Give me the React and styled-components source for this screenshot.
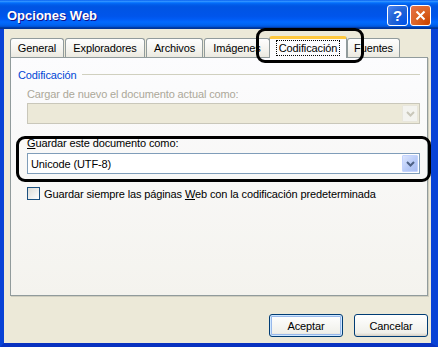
import React from 'react'
import styled, { createGlobalStyle } from 'styled-components'

const Global = createGlobalStyle`
  body {
    margin: 0;
    font-family: "Liberation Sans", Arial, sans-serif;
    font-size: 11px;
    color: #000;
  }
`

const tabs = [
  { label: 'General', width: 54 },
  { label: 'Exploradores', width: 80 },
  { label: 'Archivos', width: 57 },
  { label: 'Imágenes', width: 66 },
  { label: 'Codificación', width: 78, active: true },
  { label: 'Fuentes', width: 53 },
]

const Chevron = ({ color }) => (
  <svg width="9" height="6" viewBox="0 0 9 6">
    <path d="M1 1 L4.5 4.5 L8 1" fill="none" stroke={color} strokeWidth="2" />
  </svg>
)

const App = () => {
  return (
    <Window>
      <Global />
      <TitleBar>
        <Title>Opciones Web</Title>
        <CaptionButton kind="help">?</CaptionButton>
        <CaptionButton kind="close">
          <svg width="11" height="11" viewBox="0 0 11 11">
            <path d="M1.5 1.5 L9.5 9.5 M9.5 1.5 L1.5 9.5" stroke="#fff" strokeWidth="2" />
          </svg>
        </CaptionButton>
      </TitleBar>
      <Body>
        <TabStrip>
          {tabs.map(t => (
            <Tab key={t.label} width={t.width} active={t.active}>
              {t.active ? <Focus>{t.label}</Focus> : t.label}
            </Tab>
          ))}
        </TabStrip>
        <Panel>
          <GroupHeader>
            <GroupTitle>Codificación</GroupTitle>
            <GroupLine />
          </GroupHeader>
          <Group>
            <FieldLabel disabled>Cargar de nuevo el documento actual como:</FieldLabel>
            <Combo disabled>
              <ComboText />
              <DropButton disabled>
                <Chevron color="#C9C7BA" />
              </DropButton>
            </Combo>
            <FieldLabel spaced>
              <u>G</u>uardar este documento como:
            </FieldLabel>
            <Combo>
              <ComboText>Unicode (UTF-8)</ComboText>
              <DropButton>
                <Chevron color="#4D6185" />
              </DropButton>
            </Combo>
            <CheckRow>
              <CheckBox />
              <span>
                Guardar siempre las páginas <u>W</u>eb con la codificación predeterminada
              </span>
            </CheckRow>
          </Group>
        </Panel>
        <ButtonRow>
          <Button primary>Aceptar</Button>
          <Button>Cancelar</Button>
        </ButtonRow>
      </Body>
      <Mark style={{ left: 256, top: 28, width: 108, height: 35 }} />
      <Mark style={{ left: 16, top: 136, width: 415, height: 46 }} />
    </Window>
  )
}

export default App

const Window = styled.div`
  position: relative;
  width: 438px;
  height: 347px;
  display: flex;
  flex-direction: column;
  overflow: hidden;
`

const TitleBar = styled.div`
  height: 29px;
  flex: none;
  display: flex;
  align-items: center;
  gap: 2px;
  padding: 0 7px 0 7px;
  background: linear-gradient(
    to bottom,
    #0058ee 0%,
    #3593ff 4%,
    #288eff 6%,
    #127dff 8%,
    #036ffc 10%,
    #0262ee 14%,
    #0057e5 20%,
    #0054e3 24%,
    #0055eb 56%,
    #005bf5 66%,
    #026afe 76%,
    #0062ef 86%,
    #0052d6 92%,
    #0040ab 94%,
    #003092 100%
  );
`

const Title = styled.div`
  flex: 1;
  color: #fff;
  font-weight: bold;
  font-size: 13px;
  text-shadow: 1px 1px #0f1089;
  padding-top: 1px;
`

const CaptionButton = styled.div`
  width: 19px;
  height: 19px;
  border: 1px solid #fff;
  border-radius: 3px;
  display: flex;
  align-items: center;
  justify-content: center;
  color: #fff;
  font-weight: bold;
  font-size: 15px;
  margin-top: 1px;
  background: ${({ kind }) =>
    kind === 'close'
      ? 'radial-gradient(circle at 90% 90%, #cc4600 0%, #dc6527 55%, #e7714c 100%)'
      : 'radial-gradient(circle at 90% 90%, #0054e9 0%, #2263d5 55%, #4f86f3 100%)'};
`

const Body = styled.div`
  flex: 1;
  display: flex;
  flex-direction: column;
  background: #ece9d8;
  border-left: 4px solid #0842d6;
  border-right: 7px solid #0842d6;
  border-bottom: 4px solid #0831c0;
  padding: 7px 3px 6px 6px;
  letter-spacing: -0.12px;
`

const TabStrip = styled.div`
  height: 22px;
  display: flex;
  align-items: flex-end;
  position: relative;
  z-index: 1;
`

const Tab = styled.div`
  width: ${({ width }) => width}px;
  flex: none;
  display: flex;
  align-items: center;
  justify-content: center;
  box-sizing: border-box;
  border: 1px solid #919b9c;
  border-bottom: none;
  border-radius: 3px 3px 0 0;
  height: ${({ active }) => (active ? 22 : 19)}px;
  margin: ${({ active }) => (active ? '0 0 0 -2px' : '0 1px 1px 0')};
  background: ${({ active }) =>
    active ? '#fcfcfe' : 'linear-gradient(#fefefe, #f4f3ee 60%, #ebe9e0)'};
  border-top: ${({ active }) => (active ? '3px solid #ffc83c' : '1px solid #919b9c')};
  padding-bottom: ${({ active }) => (active ? 1 : 0)}px;
`

const Focus = styled.span`
  outline: 1px dotted #000;
  outline-offset: 1px;
  padding: 0 1px;
`

const Panel = styled.div`
  height: 239px;
  box-sizing: border-box;
  margin-top: -1px;
  border: 1px solid #919b9c;
  background: linear-gradient(#fcfcfe, #f4f3ee);
  box-shadow: 1px 1px 0 #d0cebf;
  padding: 10px 7px 0 7px;
`

const GroupHeader = styled.div`
  display: flex;
  align-items: center;
  height: 13px;
`

const GroupTitle = styled.span`
  color: #0046d5;
`

const GroupLine = styled.div`
  flex: 1;
  margin-left: 6px;
  border-top: 1px solid #d0d0bf;
`

const Group = styled.div`
  padding: 7px 0 0 9px;
  display: flex;
  flex-direction: column;
`

const FieldLabel = styled.div`
  height: 13px;
  line-height: 13px;
  color: ${({ disabled }) => (disabled ? '#aca899' : '#000')};
  margin-top: ${({ spaced }) => (spaced ? 13 : 0)}px;
  margin-bottom: ${({ spaced }) => (spaced ? 3 : 2)}px;
`

const Combo = styled.div`
  height: 21px;
  box-sizing: border-box;
  display: flex;
  align-items: center;
  border: 1px solid ${({ disabled }) => (disabled ? '#c9c7ba' : '#7f9db9')};
  background: ${({ disabled }) => (disabled ? '#ece9d8' : '#fff')};
  padding-right: 1px;
`

const ComboText = styled.div`
  flex: 1;
  padding-left: 3px;
`

const DropButton = styled.div`
  width: 16px;
  height: 17px;
  box-sizing: border-box;
  display: flex;
  align-items: center;
  justify-content: center;
  border-radius: 1px;
  border: 1px solid ${({ disabled }) => (disabled ? '#e8e6dc' : '#c3d3fd')};
  background: ${({ disabled }) =>
    disabled ? '#f3f3ef' : 'linear-gradient(135deg, #dbe5fe, #b6c9f7 60%, #aabef3)'};
`

const CheckRow = styled.div`
  display: flex;
  align-items: center;
  gap: 4px;
  margin-top: 13px;
`

const CheckBox = styled.div`
  width: 13px;
  height: 13px;
  box-sizing: border-box;
  border: 1px solid #1c5180;
  background: linear-gradient(135deg, #dcdcd7, #fff);
`

const ButtonRow = styled.div`
  display: flex;
  justify-content: flex-end;
  gap: 11px;
  margin-top: 18px;
`

const Button = styled.div`
  width: 74px;
  height: 23px;
  box-sizing: border-box;
  display: flex;
  align-items: center;
  justify-content: center;
  border: 1px solid #003c74;
  border-radius: 3px;
  background: linear-gradient(#fff, #f0f0ea 85%, #d6d0c5);
  box-shadow: ${({ primary }) =>
    primary ? 'inset 0 0 0 1px #cee7ff, inset 0 0 0 2px #98b8ea' : 'none'};
`

const Mark = styled.div`
  position: absolute;
  box-sizing: border-box;
  border: 3px solid #000;
  border-radius: 9px;
  pointer-events: none;
  z-index: 5;
`
